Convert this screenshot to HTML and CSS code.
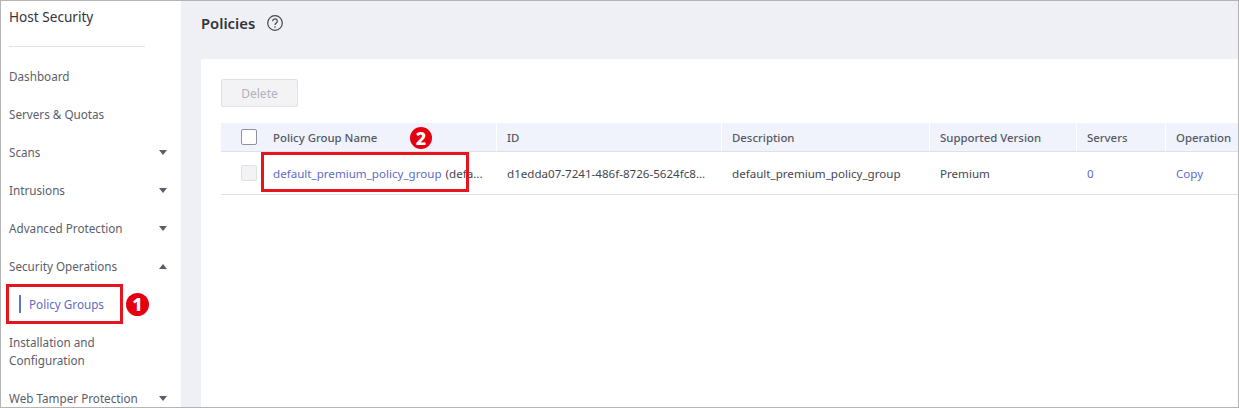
FILE: index.html
```html
<!DOCTYPE html>
<html lang="en">
<head>
<meta charset="utf-8">
<title>Policies</title>
<link rel="stylesheet" href="styles.css">
</head>
<body>
<div class="frame">
  <aside class="sidebar">
    <div class="brand">Host Security</div>
    <div class="divider"></div>
    <nav class="nav">
      <div class="nav-item">Dashboard</div>
      <div class="nav-item">Servers &amp; Quotas</div>
      <div class="nav-item">Scans<i class="caret"></i></div>
      <div class="nav-item">Intrusions<i class="caret"></i></div>
      <div class="nav-item">Advanced Protection<i class="caret"></i></div>
      <div class="nav-item">Security Operations<i class="caret up"></i></div>
      <div class="nav-item sub"><span class="sub-bar"></span>Policy Groups</div>
      <div class="nav-item two">Installation and<br>Configuration</div>
      <div class="nav-item last">Web Tamper Protection<i class="caret"></i></div>
    </nav>
  </aside>
  <main class="main">
    <header class="head">
      <h1 class="title">Policies</h1>
      <svg class="help" width="16" height="16" viewBox="0 0 16 16" aria-hidden="true">
        <circle cx="8" cy="8" r="7.3" fill="none" stroke="#45464f" stroke-width="1.2"/>
        <path d="M5.7 6.3a2.3 2.3 0 1 1 3.6 1.8c-.9.6-1.3 1-1.3 1.9" fill="none" stroke="#45464f" stroke-width="1.2"/>
        <circle cx="8" cy="12" r=".8" fill="#45464f"/>
      </svg>
    </header>
    <section class="card">
      <button class="btn" type="button">Delete</button>
      <div class="table">
        <div class="row thead">
          <div class="cell c1"><span class="check"></span>Policy Group Name</div>
          <div class="cell c2">ID</div>
          <div class="cell c3">Description</div>
          <div class="cell c4">Supported Version</div>
          <div class="cell c5">Servers</div>
          <div class="cell c6">Operation</div>
        </div>
        <div class="row tbody">
          <div class="cell c1"><span class="check off"></span><a class="link">default_premium_policy_group</a><span class="note">(defa...</span></div>
          <div class="cell c2">d1edda07-7241-486f-8726-5624fc8...</div>
          <div class="cell c3">default_premium_policy_group</div>
          <div class="cell c4">Premium</div>
          <div class="cell c5"><a class="link">0</a></div>
          <div class="cell c6"><a class="link">Copy</a></div>
        </div>
      </div>
    </section>
  </main>
  <div class="mark box1"></div>
  <div class="badge b1">1</div>
  <div class="mark box2"></div>
  <div class="badge b2">2</div>
</div>
</body>
</html>
```

FILE: styles.css
```css
* { box-sizing: border-box; }
html, body { margin: 0; padding: 0; }
body { font-family: "Noto Sans", "Open Sans", sans-serif; font-size: 12px; color: #45464f; }
.frame { position: relative; display: flex; width: 1239px; height: 408px; overflow: hidden; border: 1px solid #b4b4b4; background: #eef0f5; }
.sidebar { width: 180px; flex: none; background: #fff; overflow: hidden; }
.brand { font-size: 13.6px; line-height: 20px; padding: 6px 0 0 8px; color: #33343c; height: 45px; }
.divider { width: 136px; height: 1px; margin-left: 8px; background: #dfe1e8; }
.nav { padding-top: 10px; font-size: 11.7px; }
.nav-item { position: relative; height: 38px; line-height: 38px; padding-left: 8px; color: #5c5e69; white-space: nowrap; }
.nav-item.two { height: 56px; line-height: 18px; padding-top: 10px; }
.nav-item.sub { color: #5e6bc8; padding-left: 28px; }
.sub-bar { position: absolute; left: 18px; top: 10px; width: 2px; height: 18px; background: #5b72d6; }
.caret { position: absolute; left: 158px; top: 17px; width: 0; height: 0; border-left: 4px solid transparent; border-right: 4px solid transparent; border-top: 5px solid #5c5e69; }
.caret.up { border-top: 0; border-bottom: 5px solid #5c5e69; }
.main { flex: 1; min-width: 0; padding-left: 20px; }
.head { display: flex; align-items: center; height: 58px; padding-bottom: 14px; }
.title { margin: 0; font-size: 14.8px; font-weight: 600; color: #33343c; line-height: 20px; }
.help { margin-left: 12px; }
.card { background: #fff; height: 349px; padding: 20px 0 0 20px; }
.btn { display: block; width: 77px; height: 28px; padding: 0; border: 1px solid #dfe1e8; border-radius: 2px; background: #f3f3f5; color: #b0b2bb; font: inherit; }
.table { margin-top: 16px; font-size: 11.6px; }
.row { display: flex; }
.cell { padding-left: 10px; white-space: nowrap; display: flex; align-items: center; }
.thead { height: 29px; background: #f0f3fb; border-bottom: 1px solid #dfe1e8; font-size: 11.4px; font-weight: 500; color: #575966; }
.thead .cell { border-right: 1px solid #fff; }
.thead .c6 { border-right: 0; }
.tbody { height: 43px; border-bottom: 1px solid #dfe1e8; color: #45464f; }
.c1 { width: 276px; padding-left: 20px; }
.c2 { width: 225px; }
.c3 { width: 208px; }
.c4 { width: 147px; }
.c5 { width: 89px; }
.c6 { flex: 1; }
.check { flex: none; width: 16px; height: 16px; margin-right: 16px; border: 1px solid #8f919c; border-radius: 2px; background: #fff; }
.check.off { background: #f3f3f5; border-color: #dfe1e8; }
.note { margin-left: 4px; }
.link { color: #5e6bc8; }
.mark { position: absolute; border: 3px solid #e6141e; }
.box1 { left: 5px; top: 283px; width: 117px; height: 40px; }
.box2 { left: 260px; top: 151px; width: 208px; height: 40px; }
.badge { position: absolute; width: 23px; height: 23px; border-radius: 50%; background: #e6000f; color: #fff; font-size: 18px; font-weight: 800; line-height: 23px; text-align: center; }
.b1 { left: 125px; top: 292px; }
.b2 { left: 409px; top: 126px; width: 22px; height: 22px; line-height: 22px; }
```
